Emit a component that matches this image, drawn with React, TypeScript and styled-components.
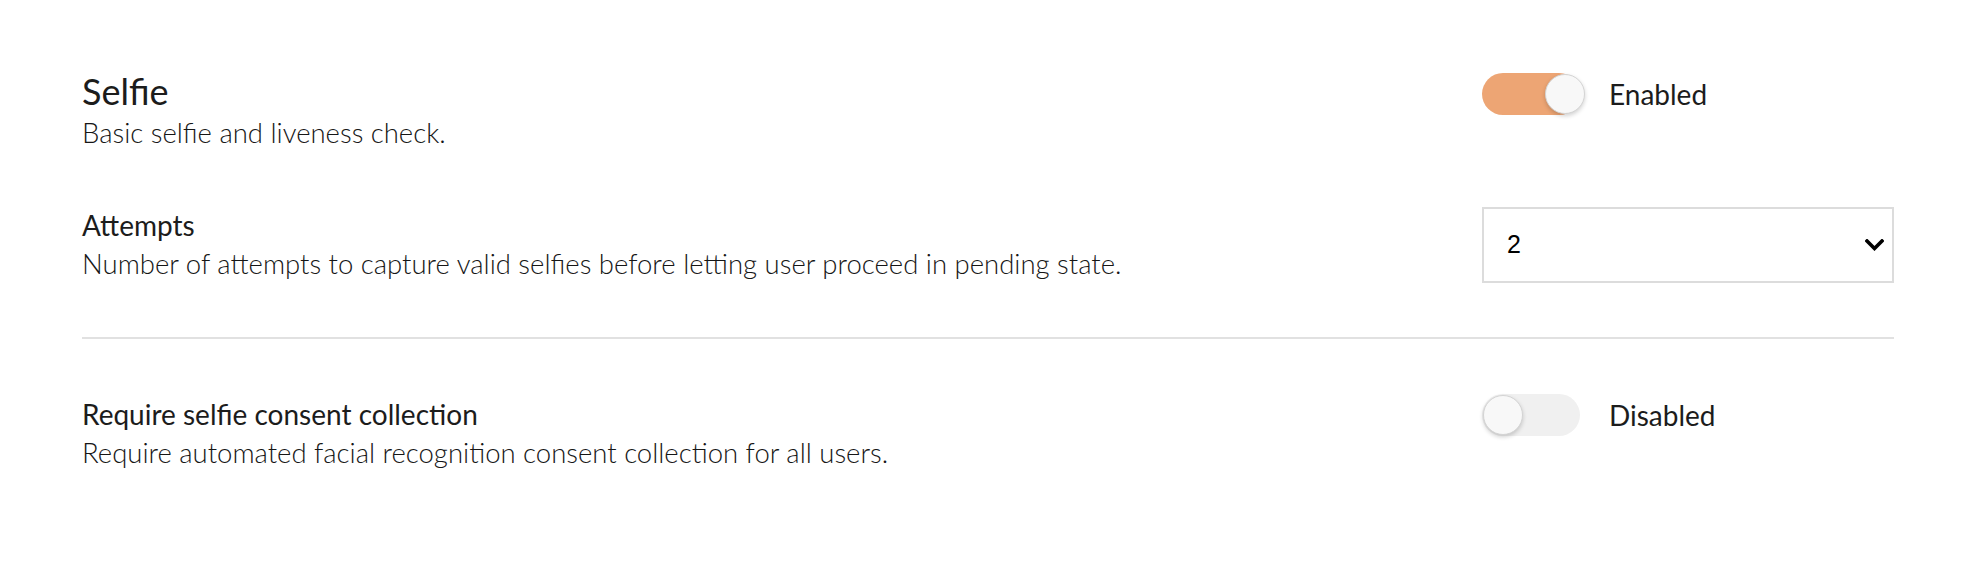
import React from "react";
import styled, { createGlobalStyle } from "styled-components";

const GlobalStyle = createGlobalStyle`
  html, body { margin: 0; padding: 0; background: #ffffff; }
  body { font-family: Lato, "Noto Sans", sans-serif; color: #222; }
`;

const Page = styled.main`
  padding: 70px 74px 40px 82px;
`;

const Row = styled.section<{ $align?: string; $gap?: number }>`
  display: grid;
  grid-template-columns: 1fr 412px;
  align-items: ${(p) => p.$align || "start"};
  margin-top: ${(p) => p.$gap || 0}px;
`;

const TextBlock = styled.div`
  display: flex;
  flex-direction: column;
`;

const Title = styled.h2`
  margin: 0;
  font-size: 36px;
  font-weight: 400;
  line-height: 43px;
  color: #1c1c1c;
`;

const Label = styled.h3`
  margin: 0;
  font-size: 28px;
  font-weight: 400;
  line-height: 38px;
  color: #1c1c1c;
`;

const Desc = styled.p`
  margin: 0;
  font-size: 27.5px;
  font-weight: 300;
  line-height: 39px;
  color: #161616;
`;

const ToggleWrap = styled.label<{ $offset: number }>`
  display: flex;
  align-items: center;
  gap: 29px;
  margin-top: ${(p) => p.$offset}px;
  cursor: pointer;
`;

const Track = styled.span<{ $on: boolean }>`
  position: relative;
  width: 98px;
  height: 42px;
  border-radius: 21px;
  background: ${(p) => (p.$on ? "#eda574" : "#f0f0f0")};
  flex-shrink: 0;
`;

const Knob = styled.span<{ $on: boolean }>`
  position: absolute;
  top: 1px;
  left: ${(p) => (p.$on ? "63px" : "1px")};
  width: 40px;
  height: 40px;
  border-radius: 50%;
  background: #f8f8f8;
  border: 1px solid #d4d4d4;
  box-sizing: border-box;
  box-shadow: 0 2px 4px rgba(0, 0, 0, 0.18);
`;

const ToggleText = styled.span`
  font-size: 28px;
  font-weight: 400;
  color: #1c1c1c;
`;

const SelectBox = styled.div`
  height: 76px;
  border: 2px solid #dcdcdc;
  box-sizing: border-box;
  display: flex;
  align-items: center;
  padding: 0 8px 0 23px;
  justify-content: space-between;
  font-family: "Liberation Sans", Arial, sans-serif;
  font-size: 25px;
  color: #000;
`;

const Chevron = styled.svg`
  width: 19px;
  height: 12px;
`;

const Divider = styled.hr`
  border: none;
  border-top: 2px solid #e1e1e1;
  margin: 54px 0 0 0;
`;

function Toggle({ on, text, offset }: { on: boolean; text: string; offset: number }) {
  return (
    <ToggleWrap $offset={offset}>
      <Track $on={on}>
        <Knob $on={on} />
      </Track>
      <ToggleText>{text}</ToggleText>
    </ToggleWrap>
  );
}

export default function App() {
  return (
    <>
      <GlobalStyle />
      <Page>
        <Row>
          <TextBlock>
            <Title>Selfie</Title>
            <Desc>Basic selfie and liveness check.</Desc>
          </TextBlock>
          <Toggle on={true} text="Enabled" offset={3} />
        </Row>
        <Row $align="center" $gap={54}>
          <TextBlock>
            <Label>Attempts</Label>
            <Desc>
              Number of attempts to capture valid selfies before letting user proceed in pending state.
            </Desc>
          </TextBlock>
          <SelectBox>
            <span>2</span>
            <Chevron viewBox="0 0 19 12">
              <path d="M2 2 L9.5 9.5 L17 2" fill="none" stroke="#000" strokeWidth="3.6" strokeLinecap="square" />
            </Chevron>
          </SelectBox>
        </Row>
        <Divider />
        <Row $gap={56}>
          <TextBlock>
            <Label>Require selfie consent collection</Label>
            <Desc>Require automated facial recognition consent collection for all users.</Desc>
          </TextBlock>
          <Toggle on={false} text="Disabled" offset={-1} />
        </Row>
      </Page>
    </>
  );
}
